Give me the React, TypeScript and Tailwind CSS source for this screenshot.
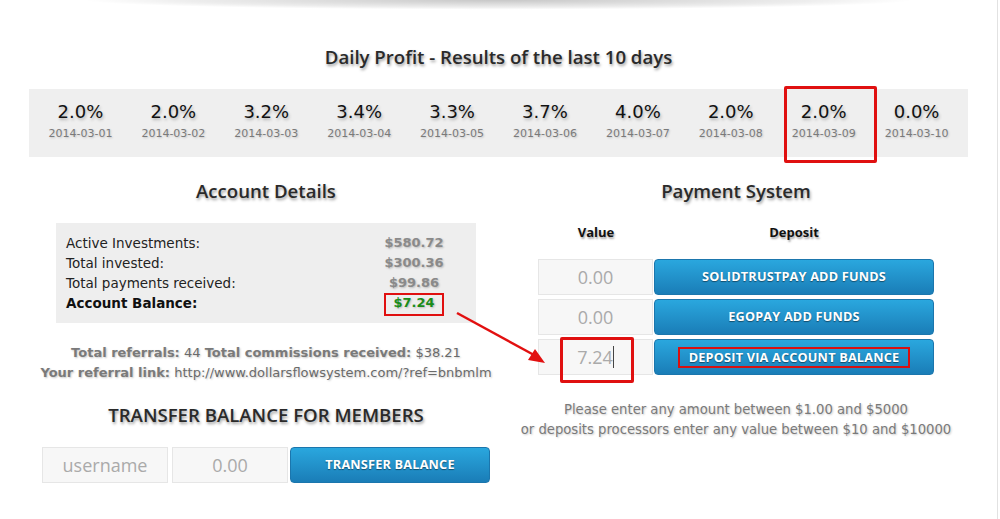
import React from "react";

const days: [string, string][] = [
  ["2.0%", "2014-03-01"],
  ["2.0%", "2014-03-02"],
  ["3.2%", "2014-03-03"],
  ["3.4%", "2014-03-04"],
  ["3.3%", "2014-03-05"],
  ["3.7%", "2014-03-06"],
  ["4.0%", "2014-03-07"],
  ["2.0%", "2014-03-08"],
  ["2.0%", "2014-03-09"],
  ["0.0%", "2014-03-10"],
];

const verdana = "font-['DejaVu_Sans','Verdana',sans-serif]";
const heading =
  "text-center font-['Open_Sans',sans-serif] font-semibold text-[18.6px] leading-[26px] text-[#2a2a2a] [text-shadow:1px_2px_3px_#9a9a9a]";
const btn =
  "flex items-center justify-center rounded-[4px] border border-[#1b76ad] bg-[linear-gradient(#2aa7de,#1a7db7)] text-white font-['Open_Sans',sans-serif] font-bold text-[12.7px] tracking-[0.2px] [text-shadow:0_1px_1px_rgba(0,0,0,0.45)]";
const input =
  "flex items-center justify-center bg-[#f7f7f7] border border-[#e6e6e6] font-['Open_Sans',sans-serif] text-[18px] text-[#aaa]";

export default function App() {
  return (
    <div className="relative w-[998px] h-[519px] overflow-hidden bg-white border-r border-[#e2e2e2]">
      <div className="h-[12px] bg-[radial-gradient(ellipse_52%_100%_at_50%_0%,rgba(0,0,0,0.22),rgba(0,0,0,0.07)_60%,transparent_80%)]" />
      <h1 className={`mt-[32px] ${heading}`}>Daily Profit - Results of the last 10 days</h1>

      <div className="mx-[29px] mt-[19px] h-[68px] bg-[#efefef] px-[5px] flex">
        {days.map(([v, d], i) => (
          <div key={d} className={`relative w-[93px] pt-[11px] text-center ${verdana}`}>
            <div className="text-[18px] leading-[24px] text-[#111] [text-shadow:1px_2px_3px_#b0b0b0]">{v}</div>
            <div className="mt-[2px] text-[11px] leading-[16px] text-[#7a7a7a] [text-shadow:1px_1px_2px_#c4c4c4]">{d}</div>
            {i === 8 && (
              <div className="absolute left-[7px] top-[-3px] w-[93px] h-[77px] border-[3px] border-[#e01010] rounded-[2px]" />
            )}
          </div>
        ))}
      </div>

      <div className="ml-[31px] w-[940px] grid grid-cols-2">
        {/* Left column */}
        <div className="flex flex-col items-center">
          <h2 className={`mt-[21px] ${heading}`}>Account Details</h2>
          <div className={`mt-[19px] w-[420px] bg-[#eeeeee] py-[10px] pl-[10px] ${verdana} text-[13.5px] text-[#222]`}>
            {[
              ["Active Investments:", "$580.72"],
              ["Total invested:", "$300.36"],
              ["Total payments received:", "$99.86"],
            ].map(([l, v]) => (
              <div key={l} className="flex h-[20px] items-center">
                <div className="flex-1">{l}</div>
                <div className="w-[90px] mr-[17px] text-center text-[13px] font-bold text-[#8a8a8a] [text-shadow:1px_1px_2px_#bbb]">{v}</div>
              </div>
            ))}
            <div className="flex h-[20px] items-center">
              <div className="flex-1 font-bold text-[#111]">Account Balance:</div>
              <div className="relative h-[20px] leading-[20px] w-[90px] mr-[17px] text-center text-[13px] font-bold text-[#1a8c1a] [text-shadow:1px_1px_2px_#bbb]">
                $7.24
                <div className="absolute left-[15px] top-[0px] w-[60px] h-[23px] border-2 border-[#e01010]" />
              </div>
            </div>
          </div>

          <div className={`mt-[20px] text-center ${verdana} text-[13px] leading-[20px] text-[#6a6a6a] [text-shadow:1px_1px_2px_#c8c8c8]`}>
            <div>
              <b className="text-[#7a7a7a]">Total referrals:</b> 44 <b className="text-[#7a7a7a]">Total commissions received:</b> $38.21
            </div>
            <div>
              <b className="text-[#7a7a7a]">Your referral link:</b> http://www.dollarsflowsystem.com/?ref=bnbmlm
            </div>
          </div>

          <h2 className={`mt-[19px] ${heading}`}>TRANSFER BALANCE FOR MEMBERS</h2>

          <div className="mt-[19px] flex h-[36px]">
            <div className={`${input} w-[126px]`}>username</div>
            <div className={`${input} w-[116px] ml-[4px]`}>0.00</div>
            <div className={`${btn} w-[200px] ml-[2px]`}>TRANSFER BALANCE</div>
          </div>
        </div>

        {/* Right column */}
        <div className="flex flex-col items-center">
          <h2 className={`mt-[21px] ${heading}`}>Payment System</h2>
          <div className="mt-[19px] w-[396px]">
            <div className="flex h-[20px] items-center font-['Open_Sans',sans-serif] font-bold text-[13px] text-[#111] [text-shadow:1px_2px_2px_#aaa]">
              <div className="w-[116px] text-center">Value</div>
              <div className="flex-1 text-center">Deposit</div>
            </div>
            <div className="mt-[16px] flex flex-col gap-[4px]">
              <div className="flex h-[36px]">
                <div className={`${input} w-[115px]`}>0.00</div>
                <div className={`${btn} flex-1 ml-[1px]`}>SOLIDTRUSTPAY ADD FUNDS</div>
              </div>
              <div className="flex h-[36px]">
                <div className={`${input} w-[115px]`}>0.00</div>
                <div className={`${btn} flex-1 ml-[1px]`}>EGOPAY ADD FUNDS</div>
              </div>
              <div className="flex h-[36px]">
                <div className={`${input} relative w-[115px] text-[#666]`}>
                  <span>7.24</span>
                  <span className="h-[22px] border-l border-[#444]" />
                  <div className="absolute left-[21px] top-[-3px] w-[74px] h-[46px] border-[3px] border-[#e01010] rounded-[2px]" />
                </div>
                <div className={`${btn} flex-1 ml-[1px]`}>
                  <span className="border-2 border-[#d81010] px-[9px] leading-[17px]">DEPOSIT VIA ACCOUNT BALANCE</span>
                </div>
              </div>
            </div>
          </div>
          <div className={`mt-[25px] text-center ${verdana} text-[13.2px] leading-[20px] text-[#7a7a7a] [text-shadow:1px_1px_2px_#c8c8c8]`}>
            <div>Please enter any amount between $1.00 and $5000</div>
            <div>or deposits processors enter any value between $10 and $10000</div>
          </div>
        </div>
      </div>

      <svg className="absolute left-0 top-0 pointer-events-none" width="998" height="519">
        <line x1="457" y1="313" x2="534" y2="355" stroke="#e21010" strokeWidth="2.5" />
        <polygon points="545,363 528,360 535,349" fill="#e21010" />
      </svg>
    </div>
  );
}
